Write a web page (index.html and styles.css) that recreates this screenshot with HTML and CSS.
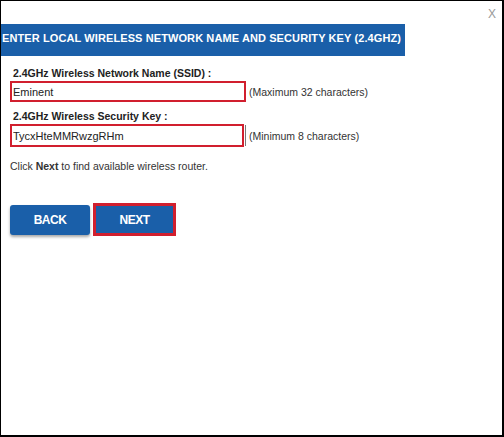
FILE: index.html
```html
<!DOCTYPE html>
<html lang="en">
<head>
    <meta charset="UTF-8">
    <meta name="viewport" content="width=device-width, initial-scale=1.0">
    <title>Wireless Setup</title>
    <link rel="stylesheet" href="styles.css">
</head>
<body>

<div class="wizard-frame">
    <div class="wizard-top">
        <span class="close-btn">X</span>
    </div>
    <div class="wizard-title">ENTER LOCAL WIRELESS NETWORK NAME AND SECURITY KEY (2.4GHZ)</div>

    <div class="wizard-body">
        <div class="field-label">2.4GHz Wireless Network Name (SSID) :</div>
        <div class="field-row">
            <div class="field-box">
                <input type="text" class="field-input" value="Eminent">
            </div>
            <span class="field-hint">(Maximum 32 characters)</span>
        </div>

        <div class="field-label">2.4GHz Wireless Security Key :</div>
        <div class="field-row">
            <div class="field-box field-box-key">
                <input type="text" class="field-input" value="TycxHteMMRwzgRHm">
            </div>
            <span class="field-hint">(Minimum 8 characters)</span>
        </div>

        <p class="wizard-note">Click <b>Next</b> to find available wireless router.</p>

        <div class="wizard-buttons">
            <button class="wizard-btn">BACK</button>
            <div class="btn-highlight">
                <button class="wizard-btn">NEXT</button>
            </div>
        </div>
    </div>
</div>

</body>
</html>
```

FILE: styles.css
```css
/* Page reset */
body {
    margin: 0;
    font-family: "Liberation Sans", Arial, sans-serif;
    color: #222;
    background: #fff;
}

/* Outer window frame */
.wizard-frame {
    width: 504px;
    height: 437px;
    box-sizing: border-box;
    border-top: 1px solid #000;
    border-left: 1px solid #000;
    border-right: 2px solid #000;
    border-bottom: 2px solid #000;
    overflow: hidden;
}

.wizard-top {
    height: 23px;
    display: flex;
    justify-content: flex-end;
    align-items: flex-start;
}

.close-btn {
    font-size: 12px;
    color: #999;
    margin: 6px 6px 0 0;
}

/* Blue title bar */
.wizard-title {
    width: 404px;
    height: 32px;
    box-sizing: border-box;
    background-color: #1a5fa9;
    color: #fff;
    font-size: 11px;
    font-weight: bold;
    letter-spacing: 0.1px;
    line-height: 28px;
    padding-left: 1px;
    white-space: nowrap;
}

.wizard-body {
    padding: 9px 0 0 9px;
}

.field-label {
    font-size: 10.5px;
    font-weight: bold;
    margin-left: 3px;
    height: 16px;
    line-height: 16px;
}

.field-row {
    display: flex;
    align-items: center;
    margin-bottom: 6px;
}

/* Red highlight around the inputs */
.field-box {
    width: 236px;
    height: 21px;
    box-sizing: border-box;
    border: 2px solid #d11f2e;
    display: flex;
}

.field-box-key {
    width: 234px;
    height: 23px;
    margin-right: 2px;
    box-shadow: 2px 0 0 -1px #fff, 3px 0 0 -1px #777;
}

.field-input {
    border: none;
    outline: none;
    padding: 0 0 0 1px;
    width: 100%;
    font-family: inherit;
    font-size: 11px;
    color: #222;
    background: transparent;
}

.field-hint {
    font-size: 10.5px;
    color: #333;
    margin-left: 3px;
}

.wizard-note {
    font-size: 10.5px;
    color: #333;
    margin: 13px 0 0 0;
}

.wizard-buttons {
    display: flex;
    align-items: center;
    margin-top: 31px;
}

.wizard-btn {
    width: 80px;
    height: 30px;
    border: none;
    border-radius: 3px;
    background-color: #1a5fa9;
    color: #fff;
    font-family: inherit;
    font-size: 12px;
    font-weight: bold;
    letter-spacing: -0.5px;
    box-shadow: 0 2px 3px rgba(0, 0, 0, 0.35);
}

.btn-highlight {
    margin-left: 3px;
    border: 3px solid #d11f2e;
    display: flex;
}

.btn-highlight .wizard-btn {
    width: 77px;
    height: 27px;
    border-radius: 0;
    box-shadow: none;
}
```
